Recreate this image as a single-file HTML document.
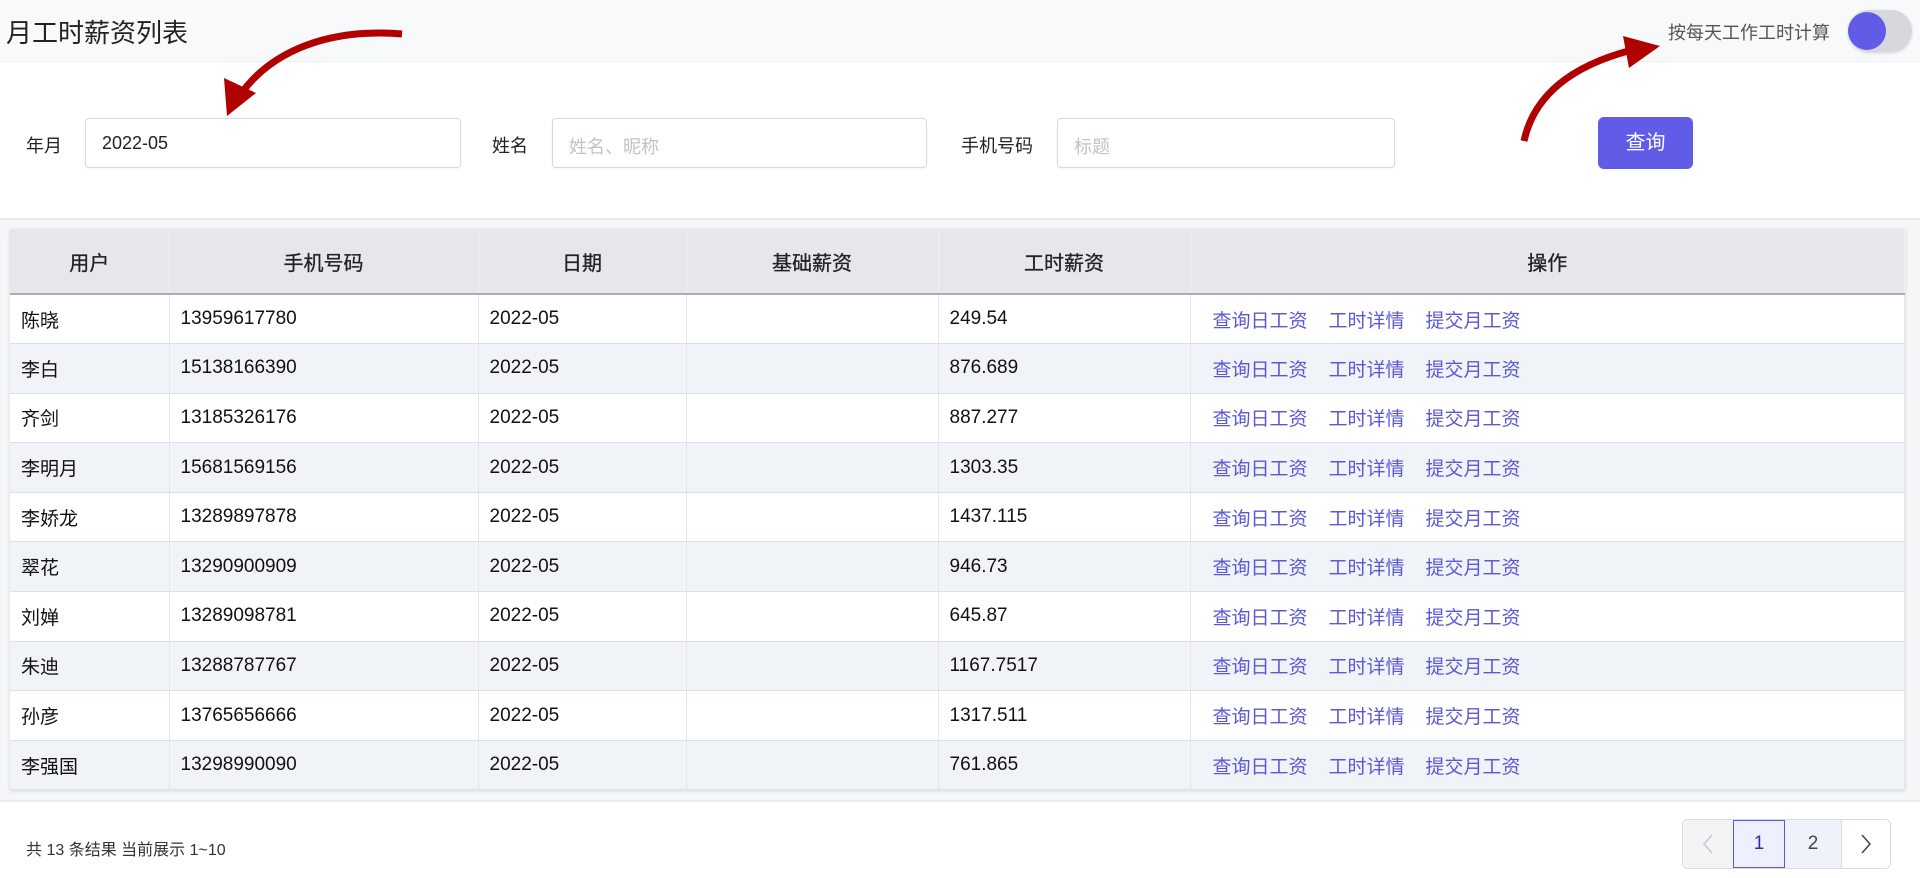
<!DOCTYPE html>
<html><head><meta charset="utf-8"><style>
*{box-sizing:border-box;margin:0;padding:0}
body{width:1920px;height:878px;overflow:hidden;background:#fff;font-family:"Liberation Sans","Noto Sans CJK SC",sans-serif;color:#1f2328;position:relative}
.hdr{position:absolute;left:0;top:0;width:1920px;height:62px;background:#f8f9fb;border-bottom:1px solid #eceef2}
.title{position:absolute;left:6px;top:13px;font-size:26px;color:#222}
.tg-t{position:absolute;left:1668px;top:19px;font-size:18px;color:#555}
.tg{position:absolute;left:1848px;top:10px;width:64px;height:42px;border-radius:21px;background:#d6d8de;box-shadow:0 1px 3px rgba(0,0,0,.15)}
.tg::after{content:"";position:absolute;left:0;top:2px;width:38px;height:38px;border-radius:50%;background:#605ce8}
.lbl{position:absolute;top:132px;font-size:18px;color:#222}
.inp{position:absolute;top:118px;height:50px;border:1px solid #d5d8de;border-radius:4px;font-size:18px;padding:14px 0 0 16px;color:#222;box-shadow:0 1px 2px rgba(0,0,0,.05)}
.ph{color:#bfc3ca}
.btn{position:absolute;left:1598px;top:117px;width:95px;height:52px;border-radius:6px;background:#605ce8;color:#fff;font-size:20px;text-align:center;line-height:52px}
.band{position:absolute;left:0;top:218px;width:1920px;height:584px;background:#f5f6f8;border-top:2px solid #e8eaee;border-bottom:2px solid #e8eaee}
table{position:absolute;left:10px;top:229px;width:1895px;border-collapse:collapse;background:#fff;box-shadow:0 1px 4px rgba(0,0,0,.12);font-size:19px}
th{height:65px;background:#e5e7eb;font-weight:normal;font-size:20px;color:#222;border-right:1px solid #f0f1f4;border-bottom:2px solid #a9adb5;-webkit-text-stroke:0.3px #222}
td{height:49.6px;padding-left:11px;border-right:1px solid #e3e5e9;border-bottom:1px solid #dcdfe4;color:#111}
tr:nth-child(odd) td{background:#f0f3f8}
a{color:#5b58d6;text-decoration:none;margin-right:21px}
td.op{padding-left:22px}
.ft{position:absolute;left:26px;top:836px;font-size:16px;color:#333}
.pg{position:absolute;left:1682px;top:819px;height:50px;display:flex;border:1px solid #d8dbe0;border-radius:6px;overflow:hidden}
.pg div{height:48px;line-height:48px;text-align:center;font-size:19px;color:#444;display:flex;align-items:center;justify-content:center}
</style></head><body>
<div class="hdr"></div>
<div class="title">月工时薪资列表</div>
<div class="tg-t">按每天工作工时计算</div>
<div class="tg"></div>
<svg style="position:absolute;left:0;top:0" width="1920" height="200">
<path d="M402 34 C330 28 270 50 238 98" stroke="#b00000" stroke-width="7" fill="none"/>
<path d="M227 116 L224 78 L256 93 Z" fill="#b00000"/>
<path d="M1524 141 C1535 90 1580 62 1640 48" stroke="#b00000" stroke-width="7" fill="none"/>
<path d="M1660 46 L1623 36 L1629 68 Z" fill="#b00000"/>
</svg>
<div class="lbl" style="left:26px">年月</div>
<div class="inp" style="left:85px;width:376px">2022-05</div>
<div class="lbl" style="left:492px">姓名</div>
<div class="inp ph" style="left:552px;width:375px">姓名、昵称</div>
<div class="lbl" style="left:961px">手机号码</div>
<div class="inp ph" style="left:1057px;width:338px">标题</div>
<div class="btn">查询</div>
<div class="band"></div>
<table>
<tr><th style="width:159px">用户</th><th style="width:309px">手机号码</th><th style="width:208px">日期</th><th style="width:252px">基础薪资</th><th style="width:252px">工时薪资</th><th>操作</th></tr>
<tr><td>陈晓</td><td>13959617780</td><td>2022-05</td><td></td><td>249.54</td><td class="op"><a>查询日工资</a><a>工时详情</a><a>提交月工资</a></td></tr>
<tr><td>李白</td><td>15138166390</td><td>2022-05</td><td></td><td>876.689</td><td class="op"><a>查询日工资</a><a>工时详情</a><a>提交月工资</a></td></tr>
<tr><td>齐剑</td><td>13185326176</td><td>2022-05</td><td></td><td>887.277</td><td class="op"><a>查询日工资</a><a>工时详情</a><a>提交月工资</a></td></tr>
<tr><td>李明月</td><td>15681569156</td><td>2022-05</td><td></td><td>1303.35</td><td class="op"><a>查询日工资</a><a>工时详情</a><a>提交月工资</a></td></tr>
<tr><td>李娇龙</td><td>13289897878</td><td>2022-05</td><td></td><td>1437.115</td><td class="op"><a>查询日工资</a><a>工时详情</a><a>提交月工资</a></td></tr>
<tr><td>翠花</td><td>13290900909</td><td>2022-05</td><td></td><td>946.73</td><td class="op"><a>查询日工资</a><a>工时详情</a><a>提交月工资</a></td></tr>
<tr><td>刘婵</td><td>13289098781</td><td>2022-05</td><td></td><td>645.87</td><td class="op"><a>查询日工资</a><a>工时详情</a><a>提交月工资</a></td></tr>
<tr><td>朱迪</td><td>13288787767</td><td>2022-05</td><td></td><td>1167.7517</td><td class="op"><a>查询日工资</a><a>工时详情</a><a>提交月工资</a></td></tr>
<tr><td>孙彦</td><td>13765656666</td><td>2022-05</td><td></td><td>1317.511</td><td class="op"><a>查询日工资</a><a>工时详情</a><a>提交月工资</a></td></tr>
<tr><td>李强国</td><td>13298990090</td><td>2022-05</td><td></td><td>761.865</td><td class="op"><a>查询日工资</a><a>工时详情</a><a>提交月工资</a></td></tr>
</table>
<div class="ft">共 13 条结果 当前展示 1~10</div>
<div class="pg">
<div style="width:50px;background:#f3f4f6"><svg width="12" height="22"><path d="M10 2 L2 11 L10 20" stroke="#c4c7cd" stroke-width="1.5" fill="none"/></svg></div>
<div style="width:52px;background:#eef1fd;border:1px solid #5b58d6;color:#2f2ca8">1</div>
<div style="width:57px;background:#eef2fb;border-right:1px solid #d8dbe0">2</div>
<div style="width:48px;background:#fff"><svg width="12" height="22"><path d="M2 2 L10 11 L2 20" stroke="#444" stroke-width="1.5" fill="none"/></svg></div>
</div>
</body></html>
